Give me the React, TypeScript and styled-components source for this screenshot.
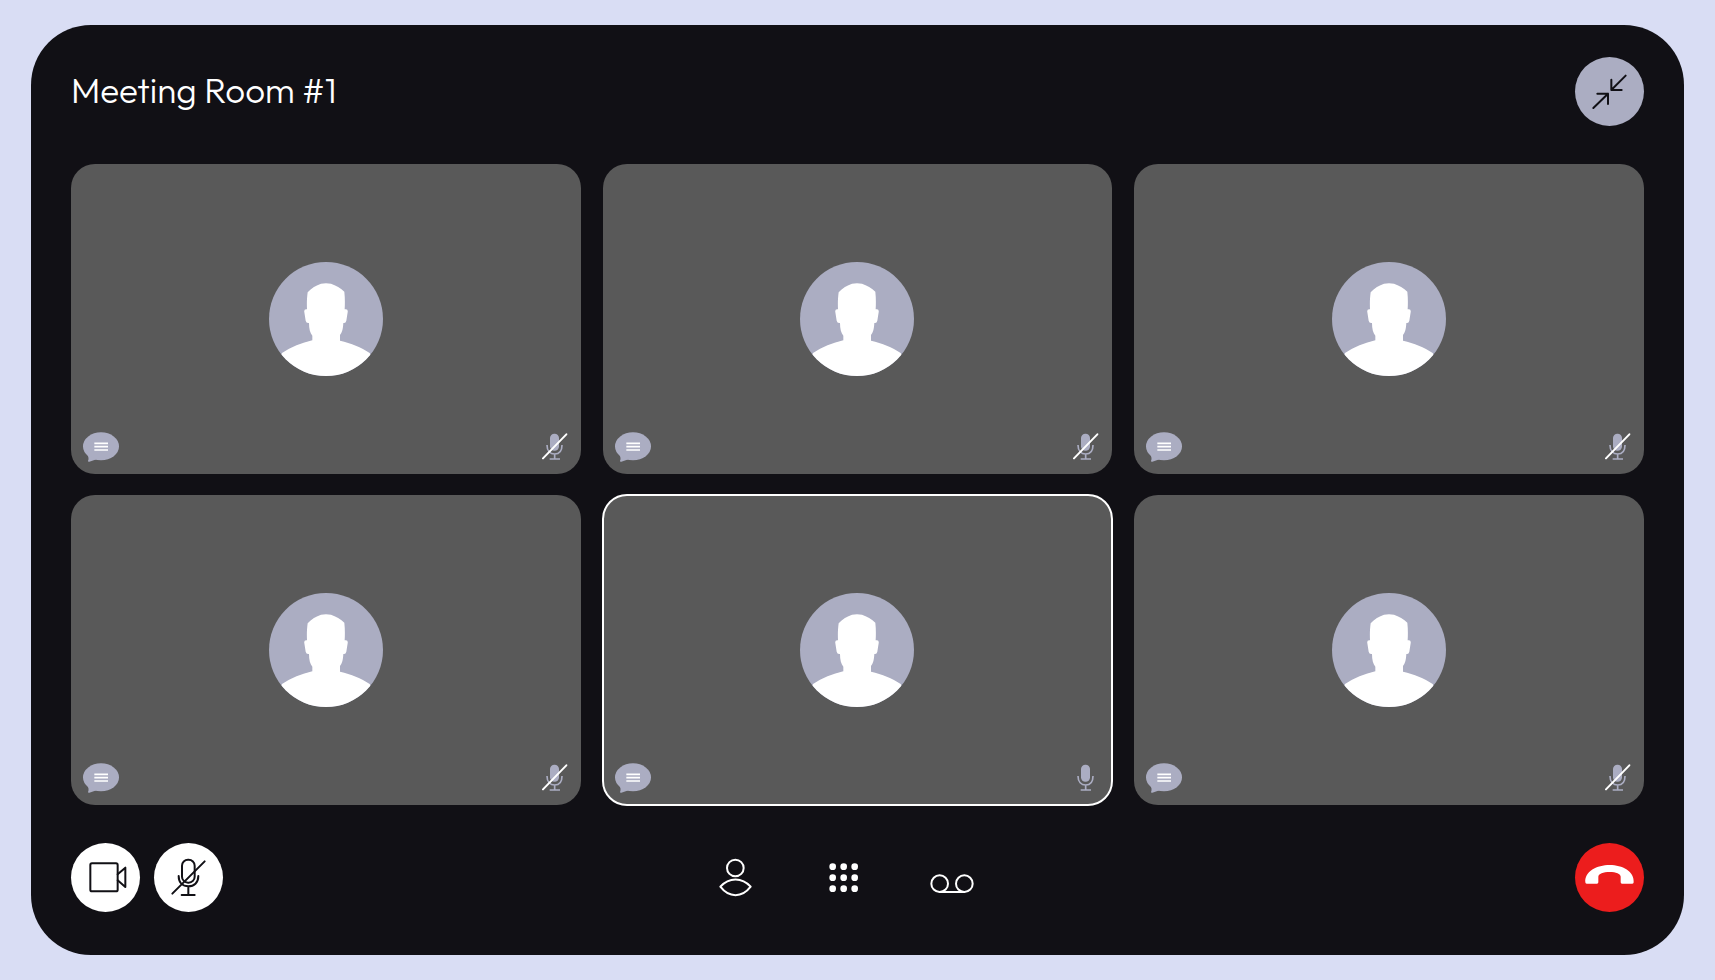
import React from "react";
import styled, { createGlobalStyle } from "styled-components";

const color = {
  page: "#d9ddf4",
  panel: "#111015",
  tile: "#595959",
  muted: "#abadc2",
  white: "#ffffff",
  danger: "#ec1d1d",
};

const GlobalStyle = createGlobalStyle`
  *, *::before, *::after { box-sizing: border-box; }
  body {
    margin: 0;
    background: ${color.page};
    color: ${color.white};
    font-family: Outfit, Inter, "Open Sans", sans-serif;
  }
`;

const Page = styled.div`
  display: flex;
  min-height: 100vh;
  padding: 25px 31px;
`;

const Room = styled.main`
  display: flex;
  flex: 1;
  flex-direction: column;
  gap: 38px;
  padding: 32px 40px 43px;
  border-radius: 60px;
  background: ${color.panel};
`;

const Header = styled.header`
  display: flex;
  align-items: center;
  justify-content: space-between;
`;

const Title = styled.h1`
  margin: 0;
  padding-bottom: 3px;
  font-size: 35px;
  font-weight: 300;
  line-height: 40px;
`;

const RoundButton = styled.button<{ $fill: string }>`
  display: block;
  width: 69px;
  height: 69px;
  padding: 0;
  border: 0;
  border-radius: 50%;
  background: ${(p) => p.$fill};
  cursor: pointer;
`;

const PlainButton = styled.button`
  display: block;
  width: 44px;
  height: 44px;
  padding: 0;
  border: 0;
  background: transparent;
  cursor: pointer;
`;

const Icon = styled.svg<{ $stroke?: string }>`
  display: block;
  width: 100%;
  height: 100%;
  fill: none;
  stroke: ${(p) => p.$stroke ?? "none"};
  stroke-width: 6;
  stroke-linecap: round;
  stroke-linejoin: round;
`;

const Participants = styled.ul`
  display: grid;
  flex: 1;
  grid-template-columns: repeat(3, 1fr);
  grid-auto-rows: 1fr;
  gap: 21px 22px;
  margin: 0;
  padding: 0;
  list-style: none;
`;

const Tile = styled.li<{ $speaking: boolean }>`
  display: grid;
  grid-template-columns: 1fr auto 1fr;
  grid-template-rows: 1fr auto 1fr;
  min-height: 220px;
  border-radius: 24px;
  background: ${color.tile};
  outline: ${(p) => (p.$speaking ? `2px solid ${color.white}` : "none")};
  outline-offset: -1px;
`;

const Avatar = styled.svg`
  grid-area: 2 / 2;
  width: 114px;
  height: 114px;
`;

const ChatBadge = styled.svg`
  grid-area: 3 / 1;
  place-self: end start;
  width: 36px;
  height: 30px;
  margin: 0 0 12px 12px;
`;

const MicBadge = styled.svg`
  grid-area: 3 / 3;
  place-self: end;
  width: 26px;
  height: 27px;
  margin: 0 13px 14px 0;
  fill: none;
  stroke-width: 5;
`;

const Footer = styled.footer`
  display: grid;
  grid-template-columns: 1fr auto 1fr;
  align-items: center;
`;

const DeviceControls = styled.div`
  display: flex;
  gap: 14px;
`;

const RoomControls = styled.div`
  display: flex;
  gap: 64px;
  padding-right: 28px;
`;

const CallControls = styled.div`
  display: flex;
  justify-content: flex-end;
`;

type Participant = { id: number; muted: boolean; speaking: boolean };

const participants: Participant[] = [
  { id: 1, muted: true, speaking: false },
  { id: 2, muted: true, speaking: false },
  { id: 3, muted: true, speaking: false },
  { id: 4, muted: true, speaking: false },
  { id: 5, muted: false, speaking: true },
  { id: 6, muted: true, speaking: false },
];

const dots = [398, 431, 464].flatMap((x) => [79, 112, 145].map((y) => ({ x, y })));

function ParticipantTile({ id, muted, speaking }: Participant) {
  const clip = `avatar-${id}`;
  return (
    <Tile $speaking={speaking}>
      <Avatar viewBox="26 36 342 342" aria-hidden="true">
        <clipPath id={clip}>
          <circle cx="197" cy="207" r="171" />
        </clipPath>
        <g clipPath={`url(#${clip})`}>
          <rect x="26" y="36" width="342" height="342" fill={color.muted} />
          <path
            fill={color.white}
            d="M140 178C139 158 140 142 142 127C153 114 168 106 182 101Q197 98 212 101C226 106 242 114 252 125C254 143 254 160 253 178Q264 175 262 187L258 212Q256 221 249 219C248 238 245 248 239 255V272C273 280 302 291 328 309L370 400H26L65 309C92 291 124 279 156 271V257C149 248 146 237 146 219Q138 221 136 212L132 187Q130 176 140 178Z"
          />
        </g>
      </Avatar>
      <ChatBadge viewBox="69 65 108 90" aria-hidden="true">
        <ellipse cx="123" cy="108" rx="54" ry="42" fill={color.muted} />
        <path d="M82 132Q88 144 84 152Q84 155 88 154L112 146Z" fill={color.muted} />
        <path d="M103 99H144M103 109H144M103 119H144" stroke={color.white} strokeWidth="5" />
      </ChatBadge>
      <MicBadge viewBox="64 70 78 81" role="img" aria-label={muted ? "Muted" : "Unmuted"}>
        <rect x="88" y="72" width="27" height="51" rx="13" fill={color.muted} />
        <path d="M79 106C79 124 89 133 102 133C115 133 124 124 124 106M102 133V146M87 148H118" stroke={color.muted} />
        {muted && <path d="M67 146L137 74" stroke={color.white} strokeWidth="6" strokeLinecap="round" />}
      </MicBadge>
    </Tile>
  );
}

export default function App() {
  return (
    <>
      <GlobalStyle />
      <Page>
        <Room>
          <Header>
            <Title>Meeting Room #1</Title>
            <RoundButton type="button" $fill={color.muted} aria-label="Exit full screen">
              <Icon viewBox="106 110 207 207" $stroke={color.panel}>
                <path d="M258 166L215 209M215 178V209H246M161 263L205 220M173 220H205V251" />
              </Icon>
            </RoundButton>
          </Header>

          <Participants>
            {participants.map((p) => (
              <ParticipantTile key={p.id} {...p} />
            ))}
          </Participants>

          <Footer>
            <DeviceControls>
              <RoundButton type="button" $fill={color.white} aria-label="Camera">
                <Icon viewBox="33 39 207 207" $stroke={color.panel}>
                  <rect x="91" y="100" width="82" height="84" rx="5" />
                  <path d="M173 133L196 113V171L173 151" />
                </Icon>
              </RoundButton>
              <RoundButton type="button" $fill={color.white} aria-label="Unmute microphone">
                <Icon viewBox="282 39 207 207" $stroke={color.panel}>
                  <rect x="366" y="89" width="38" height="69" rx="18" />
                  <path d="M356 138C356 158 368 169 385 169C402 169 415 158 415 138M385 169V195M365 195H404M337 191L434 94" />
                </Icon>
              </RoundButton>
            </DeviceControls>

            <RoomControls>
              <PlainButton type="button" aria-label="Participants">
                <Icon viewBox="41 47 132 132" $stroke={color.white}>
                  <circle cx="105" cy="83" r="25" />
                  <path d="M60 139C86 110 125 110 151 139C125 173 86 173 60 139Z" />
                </Icon>
              </PlainButton>
              <PlainButton type="button" aria-label="Layout">
                <Icon viewBox="366 47 132 132">
                  {dots.map(({ x, y }) => (
                    <circle key={`${x}-${y}`} cx={x} cy={y} r="10" fill={color.white} />
                  ))}
                </Icon>
              </PlainButton>
              <PlainButton type="button" aria-label="Recording">
                <Icon viewBox="690 47 132 132" $stroke={color.white}>
                  <circle cx="719" cy="130" r="25" />
                  <circle cx="793" cy="130" r="25" />
                  <path d="M719 155H793" />
                </Icon>
              </PlainButton>
            </RoomControls>

            <CallControls>
              <RoundButton type="button" $fill={color.danger} aria-label="Leave call">
                <Icon viewBox="46 39 207 207">
                  <path
                    fill={color.white}
                    d="M77 157C74 124 112 105 150 105C188 105 225 124 222 157Q222 161 218 161H187Q183 161 183 157V140C183 132 169 126 150 126C131 126 116 132 116 140V157Q116 161 112 161H81Q77 161 77 157Z"
                  />
                </Icon>
              </RoundButton>
            </CallControls>
          </Footer>
        </Room>
      </Page>
    </>
  );
}
